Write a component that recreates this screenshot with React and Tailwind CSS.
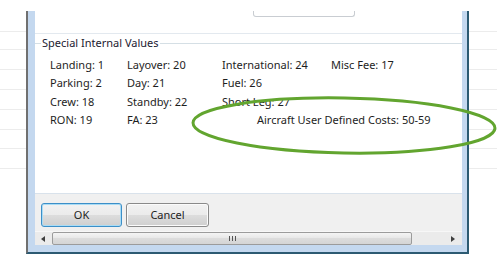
const font = { fontFamily: '"Noto Sans", "Open Sans", sans-serif' };

const stripRows = [32, 18, 20, 20, 20, 20, 19, 20];

const Strip = ({ width }) => (
	<div className={`${width} shrink-0 flex flex-col`}>
		{stripRows.map((h, i) => (
			<div
				key={i}
				className="border-b border-[#ececec]"
				style={{ height: h }}
			/>
		))}
	</div>
);

const Btn = ({ children, focused }) => (
	<button
		className={`h-[24px] rounded-[3px] border text-[11px] text-[#1e1e1e] bg-[linear-gradient(#f2f2f2,#ebebeb_50%,#dddddd_50%,#cfcfcf)] ${
			focused
				? "w-[81px] border-[#3c8fc8] shadow-[inset_0_0_0_1px_#a9dcf5]"
				: "w-[83px] border-[#8a8a8a] shadow-[inset_0_0_0_1px_#fbfbfb]"
		}`}>
		{children}
	</button>
);

const cells = [
	["Landing: 1", "Layover: 20", "International: 24", "Misc Fee: 17"],
	["Parking: 2", "Day: 21", "Fuel: 26", ""],
	["Crew: 18", "Standby: 22", "Short Leg: 27", ""]
];

export default function App() {
	return (
		<div
			className="relative w-[497px] h-[255px] bg-white overflow-hidden flex text-[11px] text-[#1e1e1e]"
			style={font}>
			<Strip width="w-[26px]" />

			<div className="w-[443px] shrink-0 pt-[11px] flex flex-col">
				<div className="border-l-2 border-r-2 border-b-2 border-l-[#707070] border-r-[#2c5a72] border-b-[#2c5a72]">
					<div className="border-l-[7px] border-r-[5px] border-b-[7px] border-[#c4d8ef] flex flex-col">
						{/* client area */}
						<div className="h-[182px] bg-white flex flex-col">
							<div className="ml-[218px] w-[102px] h-[6px] border-x border-b border-[#c9cdd2] rounded-b-[3px]" />
							<div className="mt-[16px] h-px bg-[#e3e9ef]" />
							<div className="mt-[2px] h-[14px] flex items-center">
								<div className="w-[6px] h-px bg-[#d5dfe5]" />
								<span className="px-[1px] leading-[14px] text-[#1b2030]">
									Special Internal Values
								</span>
								<div className="flex-1 h-px bg-[#d5dfe5]" />
							</div>
							<div className="mt-[6px] grid grid-cols-[77px_95px_109px_1fr] auto-rows-[18.4px] pl-[15px] leading-[18.4px]">
								{cells.map((row, r) =>
									row.map((c, i) => <div key={`${r}-${i}`}>{c}</div>)
								)}
								<div>RON: 19</div>
								<div>FA: 23</div>
								<div className="col-span-2 pl-[35px] whitespace-nowrap">
									Aircraft User Defined Costs: 50-59
								</div>
							</div>
						</div>
						<div className="h-px bg-[#d9e2eb]" />
						{/* button area */}
						<div className="h-[51px] bg-[#f0f0f0] pt-[9px] flex flex-col">
							<div className="flex gap-[4px] pl-[6px]">
								<Btn focused>OK</Btn>
								<Btn>Cancel</Btn>
							</div>
							<div className="mt-[4px] h-[14px] flex items-center bg-[#ebebeb] border-t border-[#f7f7f7]">
								<svg width="4" height="6" className="ml-[6px]">
									<polygon points="4,0 4,6 0,3" fill="#404040" />
								</svg>
								<div className="ml-[7px] w-[360px] h-[13px] rounded-[2px] border border-[#9b9b9b] bg-[linear-gradient(#f4f4f4,#e6e6e6_50%,#dcdcdc_50%,#d4d4d4)] flex items-center justify-center gap-[2px]">
									<div className="w-px h-[5px] bg-[#555]" />
									<div className="w-px h-[5px] bg-[#555]" />
									<div className="w-px h-[5px] bg-[#555]" />
								</div>
								<div className="flex-1" />
								<svg width="4" height="6" className="mr-[7px]">
									<polygon points="0,0 0,6 4,3" fill="#404040" />
								</svg>
							</div>
						</div>
					</div>
				</div>
			</div>

			<Strip width="flex-1" />

			<svg
				className="absolute left-0 top-0 pointer-events-none"
				width="497"
				height="255">
				<ellipse
					cx="344"
					cy="125.5"
					rx="151"
					ry="27.5"
					transform="rotate(1 344 125.5)"
					fill="none"
					stroke="#62a52f"
					strokeWidth="3"
				/>
			</svg>
		</div>
	);
}
